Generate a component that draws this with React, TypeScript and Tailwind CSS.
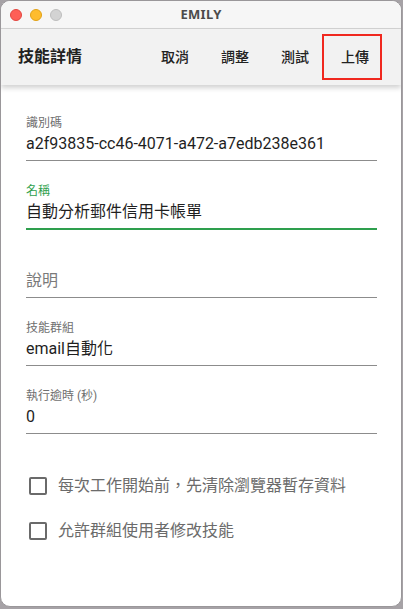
import React from 'react';

interface FieldProps {
  label?: string;
  value?: string;
  placeholder?: string;
  focused?: boolean;
}

const Field: React.FC<FieldProps> = ({ label, value, placeholder, focused }) => {
  return (
    <div className="mt-[22px] first:mt-0">
      <div className={`h-4 text-xs leading-4 ${focused ? 'text-[#2e9f4d]' : 'text-[#6f6f6f]'}`}>
        {label}
      </div>
      <div
        className={`mt-px pb-1 ${
          focused ? 'border-b-2 border-[#2e9f4d]' : 'border-b border-[#8c8c8c]'
        }`}
      >
        <div className={`h-6 text-base leading-6 ${value ? 'text-[#1f1f1f]' : 'text-[#7a7a7a]'}`}>
          {value || placeholder}
        </div>
      </div>
    </div>
  );
};

const CheckRow: React.FC<{ text: string }> = ({ text }) => (
  <label className="flex items-center h-[27px]">
    <span className="w-[18px] h-[18px] ml-[3px] border-2 border-[#6a6a6a] rounded-[2px]" />
    <span className="ml-[11px] text-base text-[#6b6b6b]">{text}</span>
  </label>
);

const App: React.FC = () => {
  const actions = ['取消', '調整', '測試'];

  return (
    <div
      className="w-[403px] h-[609px] bg-[#a6a2a6] overflow-hidden"
      style={{ fontFamily: 'Roboto, "Noto Sans CJK TC", sans-serif' }}
    >
      <div className="w-[402px] h-[607px] bg-white rounded-[10px] border border-[#9a979a] overflow-hidden flex flex-col">
        {/* title bar */}
        <div className="relative h-[28px] bg-[#f6f6f6] border-b border-[#d4d4d4] flex items-center">
          <div className="flex items-center gap-2 pl-[9px]">
            <span className="w-3 h-3 rounded-full bg-[#fe5f57] border border-[#e2463f]" />
            <span className="w-3 h-3 rounded-full bg-[#febc2e] border border-[#e1a116]" />
            <span className="w-3 h-3 rounded-full bg-[#d3d3d3] border border-[#bdbdbd]" />
          </div>
          <div
            className="absolute inset-0 flex items-center justify-center text-[13px] font-bold text-[#4b4b4b] tracking-wide"
            style={{ fontFamily: '"Noto Sans", sans-serif' }}
          >
            EMILY
          </div>
        </div>

        {/* toolbar */}
        <div className="relative z-10 h-[56px] bg-[#f2f2f2] flex items-center pl-[17px] pr-[19px] shadow-[0_3px_5px_rgba(0,0,0,0.18)]">
          <div className="text-base font-bold text-[#222]">技能詳情</div>
          <div className="ml-auto flex items-center">
            {actions.map((a) => (
              <button key={a} className="w-[60px] h-[46px] text-sm font-medium text-[#222]">
                {a}
              </button>
            ))}
            <button className="w-[60px] h-[46px] -ml-[3px] text-sm font-medium text-[#222] border-2 border-[#f0281f]">
              <span className="ml-[6px]">上傳</span>
            </button>
          </div>
        </div>

        {/* form */}
        <div className="flex-1 pt-[30px] pl-[25px] pr-[24px]">
          <Field label="識別碼" value="a2f93835-cc46-4071-a472-a7edb238e361" />
          <Field label="名稱" value="自動分析郵件信用卡帳單" focused />
          <Field placeholder="說明" />
          <Field label="技能群組" value="email自動化" />
          <Field label="執行逾時 (秒)" value="0" />

          <div className="mt-[38px] flex flex-col gap-[18px]">
            <CheckRow text="每次工作開始前，先清除瀏覽器暫存資料" />
            <CheckRow text="允許群組使用者修改技能" />
          </div>
        </div>
      </div>
    </div>
  );
};

export default App;
